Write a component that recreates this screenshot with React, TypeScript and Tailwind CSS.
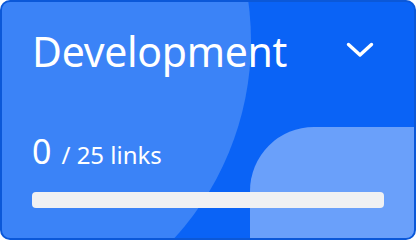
import { useState } from "react";

function ChevronIcon() {
  return (
    <svg width="28" height="16" viewBox="0 0 28 16" fill="none" aria-hidden="true">
      <path d="M2.5 2.5 L14 13 L25.5 2.5" stroke="white" strokeWidth="3.4" strokeLinecap="round" strokeLinejoin="round" />
    </svg>
  );
}

export default function App() {
  const [done] = useState(0);
  const total = 25;

  return (
    <div className="h-[240px] w-[416px] bg-white">
      <div className="relative h-full w-full overflow-hidden rounded-[10px] border-2 border-[#0b58d8] bg-[#0a63f6] text-white" style={{ fontFamily: '"Noto Sans", sans-serif' }}>
        {/* decorative shapes */}
        <div className="pointer-events-none absolute left-[-335px] top-[-253px] h-[584px] w-[584px] rounded-full bg-[#3b83f7]" />
        <div className="pointer-events-none absolute left-[248px] top-[125px] h-[200px] w-[220px] rounded-tl-[64px] bg-[#6aa0fa]" />

        <div className="relative flex h-full flex-col px-[30px] pt-[17px]">
          <div className="flex items-center justify-between">
            <h2 className="text-[41px] leading-[64px] font-normal tracking-[-0.3px]">Development</h2>
            <button className="mr-[8px] mt-[-2px] flex h-8 w-8 items-center justify-center">
              <ChevronIcon />
            </button>
          </div>
          <div className="mt-[48px] flex items-baseline">
            <span className="text-[34px] leading-[40px]">{done}</span>
            <span className="ml-[10px] text-[24px] leading-[30px]">/ {total} links</span>
          </div>
          <div className="mt-[21px] h-4 w-[352px] rounded-[4px] bg-[#f0f1f3]" />
        </div>
      </div>
    </div>
  );
}
